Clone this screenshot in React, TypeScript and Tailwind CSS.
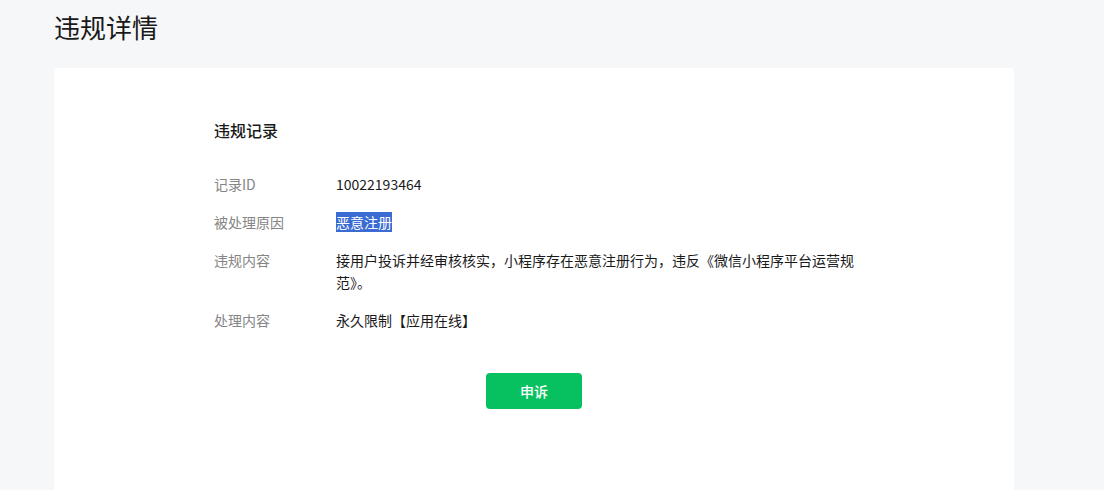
const rows: { label: string; value: React.ReactNode }[] = [
  { label: '记录ID', value: '10022193464' },
  {
    label: '被处理原因',
    value: <span className="bg-[#3a6bd2] text-white">恶意注册</span>,
  },
  {
    label: '违规内容',
    value: '接用户投诉并经审核核实，小程序存在恶意注册行为，违反《微信小程序平台运营规范》。',
  },
  { label: '处理内容', value: '永久限制【应用在线】' },
];

export default function App() {
  return (
    <div
      className="min-h-screen bg-[#f6f7f8] pl-[54px] pr-[90px] pt-[9px]"
      style={{ fontFamily: '"Noto Sans CJK SC", "Noto Sans", sans-serif' }}
    >
      {/* 页面标题 */}
      <h1 className="text-[26px] leading-[36px] text-[#1a1a1a] font-normal">违规详情</h1>

      {/* 详情卡片 */}
      <div className="mt-[23px] bg-white rounded w-[960px] h-[430px] pt-[50px]">
        <div className="w-[640px] mx-auto">
          <h2 className="text-[16px] leading-[24px] font-medium text-[#1a1a1a]">违规记录</h2>

          <div className="mt-[31px] flex flex-col gap-4">
            {rows.map((row) => (
              <div key={row.label} className="flex text-[14px] leading-[22px]">
                <div className="w-[122px] shrink-0 text-[#858585]">{row.label}</div>
                <div className="flex-1 text-[#1a1a1a]">{row.value}</div>
              </div>
            ))}
          </div>
        </div>

        {/* 申诉按钮 */}
        <div className="mt-[42px] flex justify-center">
          <button className="w-[96px] h-[36px] rounded bg-[#07c160] text-white text-[14px] font-medium">
            申诉
          </button>
        </div>
      </div>
    </div>
  );
}
